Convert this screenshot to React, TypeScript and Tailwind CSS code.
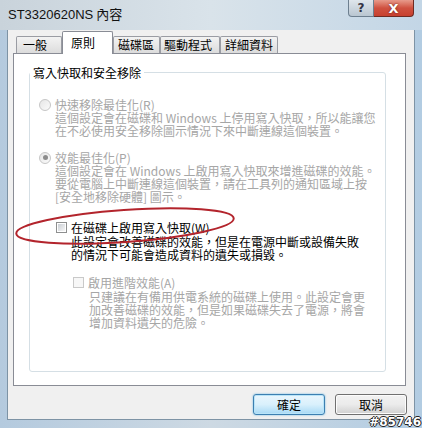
import { type ReactNode } from 'react';

const cjk = "font-['Noto_Sans_CJK_TC','Noto_Sans_CJK_JP',sans-serif]";

function Radio({ checked }: { checked?: boolean }) {
  return (
    <span className="flex h-[12px] w-[12px] shrink-0 items-center justify-center rounded-full border border-[#c6c6c6] bg-gradient-to-br from-[#e6e6e6] to-[#fbfbfb]">
      {checked && <span className="h-[5px] w-[5px] rounded-full bg-[#8c8c8c]" />}
    </span>
  );
}

function Check({ disabled }: { disabled?: boolean }) {
  return (
    <span
      className={
        disabled
          ? 'flex h-[11px] w-[11px] shrink-0 border border-[#c9c9c9] bg-[#f7f7f7]'
          : 'flex h-[11px] w-[11px] shrink-0 border border-[#8e8f8f] bg-white p-[1px]'
      }
    >
      {!disabled && <span className="h-full w-full bg-gradient-to-br from-[#cbcfd5] to-[#f6f6f6]" />}
    </span>
  );
}

function Lines({ lines, className }: { lines: string[]; className: string }) {
  return (
    <div className={className}>
      {lines.map((l) => (
        <p key={l} className="h-[13px] whitespace-nowrap leading-[13px]">
          {l}
        </p>
      ))}
    </div>
  );
}

function Tab({ children, width, pad, selected }: { children: ReactNode; width: string; pad: string; selected?: boolean }) {
  if (selected) {
    return (
      <div
        className={`relative z-10 -mb-px flex h-[23px] items-start rounded-t-[2px] border border-b-0 border-[#898c95] bg-white pt-[2px] ${width} ${pad}`}
      >
        {children}
      </div>
    );
  }
  return (
    <div
      className={`flex h-[17px] items-center rounded-t-[2px] border border-b-0 border-[#9a9ca3] bg-gradient-to-b from-[#f3f3f3] to-[#dcdcdc] ${width} ${pad}`}
    >
      {children}
    </div>
  );
}

export default function App() {
  return (
    <div
      className={`relative h-[428px] w-[422px] overflow-hidden bg-gradient-to-r from-[#b4cade] via-[#cdd9e3] to-[#b2cce2] text-[12px] text-black ${cjk}`}
    >
      {/* title bar */}
      <div className="flex h-[30px] items-start bg-gradient-to-r from-[#c9d3db] via-[#d9e3ea] to-[#c3d6e6] pl-[8px] pr-[8px]">
        <p className="mt-[6px] text-[13px] leading-[16px] text-[#111]">
          <span className="font-['Liberation_Sans',sans-serif]">ST3320620NS</span> 內容
        </p>
        <div className="ml-auto flex">
          <div className="flex h-[17px] w-[26px] items-center justify-center rounded-bl-[4px] border border-t-0 border-[#6d7f8f] bg-gradient-to-b from-[#dfe6ec] to-[#b9c6d1] text-[12px] font-bold leading-none text-[#334] font-['DejaVu_Sans',sans-serif]">
            ?
          </div>
          <div className="flex h-[17px] w-[40px] items-center justify-center rounded-br-[4px] border border-l-0 border-t-0 border-[#6e2a22] bg-gradient-to-b from-[#e79a8b] via-[#cf5140] to-[#c7402f] text-[13px] font-bold leading-none text-white font-['DejaVu_Sans',sans-serif] [text-shadow:0_0_2px_#5a1a12]">
            X
          </div>
        </div>
      </div>

      {/* client area */}
      <div className="mx-[7px] flex h-[390px] flex-col border border-t-0 border-[#7d93a5] bg-[#f0f0f0]">
        <div className="ml-[5px] flex w-[393px] flex-col">
          <div className="flex h-[23px] items-end pl-[3px]">
            <Tab width="w-[46px]" pad="pl-[6px]">一般</Tab>
            <Tab width="w-[51px]" pad="pl-[8px]" selected>
              原則
            </Tab>
            <Tab width="w-[47px]" pad="pl-[4px]">磁碟區</Tab>
            <Tab width="w-[60px]" pad="pl-[3px]">驅動程式</Tab>
            <Tab width="w-[58px]" pad="pl-[4px]">詳細資料</Tab>
          </div>

          <div className="h-[333px] border border-[#898c95] bg-white pl-[15px] pt-[12px]">
            <fieldset className="h-[306px] w-[357px] rounded-[3px] border border-[#d5dfe5]">
              <legend className="px-[3px] leading-[13px]">寫入快取和安全移除</legend>

              <div className="mt-[19px] pl-[9px] text-[#a6a6a6]">
                <div className="flex h-[13px] items-center gap-[4px] leading-[13px]">
                  <Radio />
                  <span>快速移除最佳化(R)</span>
                </div>
                <Lines
                  className="pl-[16px]"
                  lines={['這個設定會在磁碟和 Windows 上停用寫入快取，所以能讓您', '在不必使用安全移除圖示情況下來中斷連線這個裝置。']}
                />

                <div className="mt-[14px] flex h-[13px] items-center gap-[4px] leading-[13px]">
                  <Radio checked />
                  <span>效能最佳化(P)</span>
                </div>
                <Lines
                  className="pl-[16px]"
                  lines={[
                    '這個設定會在 Windows 上啟用寫入快取來增進磁碟的效能。',
                    '要從電腦上中斷連線這個裝置，請在工具列的通知區域上按',
                    '[安全地移除硬體] 圖示。',
                  ]}
                />
              </div>

              <div className="mt-[17px] pl-[26px]">
                <div className="flex h-[15px] items-center gap-[4px] leading-[13px]">
                  <Check />
                  <span>在磁碟上啟用寫入快取(W)</span>
                </div>
                <Lines
                  className="pl-[15px]"
                  lines={['此設定會改善磁碟的效能，但是在電源中斷或設備失敗', '的情況下可能會造成資料的遺失或損毀。']}
                />

                <div className="ml-[17px] mt-[14px] text-[#a6a6a6]">
                  <div className="flex h-[15px] items-center gap-[4px] leading-[13px]">
                    <Check disabled />
                    <span>啟用進階效能(A)</span>
                  </div>
                  <Lines
                    className="pl-[16px]"
                    lines={[
                      '只建議在有備用供電系統的磁碟上使用。此設定會更',
                      '加改善磁碟的效能，但是如果磁碟失去了電源，將會',
                      '增加資料遺失的危險。',
                    ]}
                  />
                </div>
              </div>
            </fieldset>
          </div>
        </div>

        <div className="mt-[8px] flex justify-end gap-[10px] pr-[7px]">
          <button className="flex h-[21px] w-[72px] items-center justify-center rounded-[3px] border border-[#3c7fb1] bg-gradient-to-b from-[#eaf6fd] via-[#d9f0fc] to-[#a7d9f5] leading-none shadow-[inset_0_0_0_1px_#b9e4f8,0_0_2px_#5fb3e0]">
            確定
          </button>
          <button className="flex h-[21px] w-[72px] items-center justify-center rounded-[3px] border border-[#707070] bg-gradient-to-b from-[#f2f2f2] via-[#ebebeb] to-[#d0d0d0] leading-none shadow-[inset_0_0_0_1px_#fcfcfc]">
            取消
          </button>
        </div>
      </div>

      {/* red annotation */}
      <svg className="pointer-events-none absolute left-0 top-0" width="422" height="428">
        <ellipse cx="125" cy="226" rx="109" ry="16" transform="rotate(-4 125 226)" fill="none" stroke="#b3242c" strokeWidth="2" />
      </svg>

      <span className="absolute bottom-[-1px] right-[1px] font-['DejaVu_Sans',sans-serif] text-[12px] font-bold leading-[13px] text-white [text-shadow:1px_0_0_#222,-1px_0_0_#222,0_1px_0_#222,0_-1px_0_#222]">
        #85746
      </span>
    </div>
  );
}
